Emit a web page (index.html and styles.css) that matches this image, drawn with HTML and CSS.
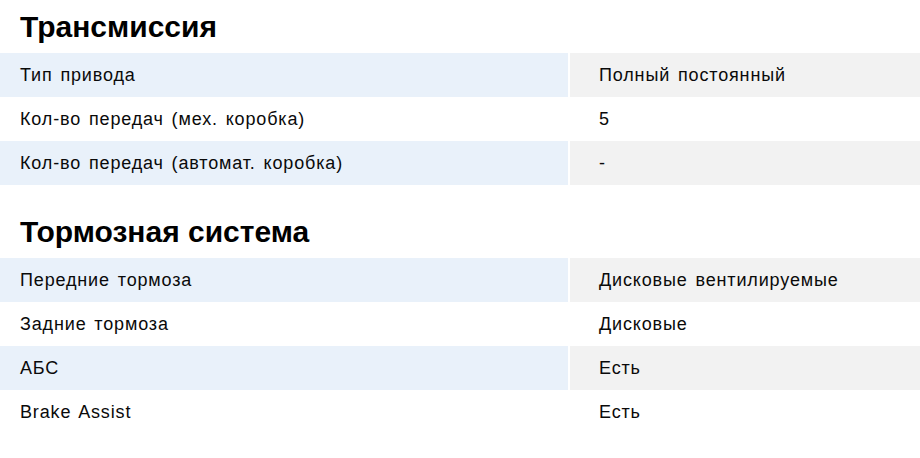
FILE: index.html
```html
<!DOCTYPE html>
<html lang="ru">
<head>
<meta charset="utf-8">
<title>Характеристики</title>
<link rel="stylesheet" href="styles.css">
</head>
<body>
<section class="spec">
  <h2 class="spec-title">Трансмиссия</h2>
  <div class="spec-table">
    <div class="row odd"><div class="name">Тип привода</div><div class="value">Полный постоянный</div></div>
    <div class="row"><div class="name">Кол-во передач (мех. коробка)</div><div class="value">5</div></div>
    <div class="row odd"><div class="name">Кол-во передач (автомат. коробка)</div><div class="value">-</div></div>
  </div>
</section>
<section class="spec spec-next">
  <h2 class="spec-title">Тормозная система</h2>
  <div class="spec-table">
    <div class="row odd"><div class="name">Передние тормоза</div><div class="value">Дисковые вентилируемые</div></div>
    <div class="row"><div class="name">Задние тормоза</div><div class="value">Дисковые</div></div>
    <div class="row odd"><div class="name">АБС</div><div class="value">Есть</div></div>
    <div class="row"><div class="name">Brake Assist</div><div class="value">Есть</div></div>
  </div>
</section>
</body>
</html>
```
FILE: styles.css
```css
html, body {
  margin: 0;
  padding: 0;
  background: #fff;
}
body {
  font-family: "Liberation Sans", Arial, sans-serif;
  color: #000;
  width: 920px;
}
.spec-next {
  margin-top: 30px;
}
.spec-title {
  margin: 10px 0 9px;
  padding-left: 20px;
  font-size: 30px;
  line-height: 34px;
  font-weight: bold;
  color: #000;
}
.spec-table {
  display: flex;
  flex-direction: column;
}
.row {
  display: grid;
  grid-template-columns: 568px 1fr;
  column-gap: 2px;
  height: 44px;
  font-size: 18px;
  line-height: 44px;
  letter-spacing: 0.85px;
  word-spacing: 2px;
  color: #0a0a0a;
}
.name {
  padding-left: 20px;
}
.value {
  padding-left: 29px;
}
.row.odd .name {
  background: #e9f1fa;
}
.row.odd .value {
  background: #f2f2f2;
}
```
